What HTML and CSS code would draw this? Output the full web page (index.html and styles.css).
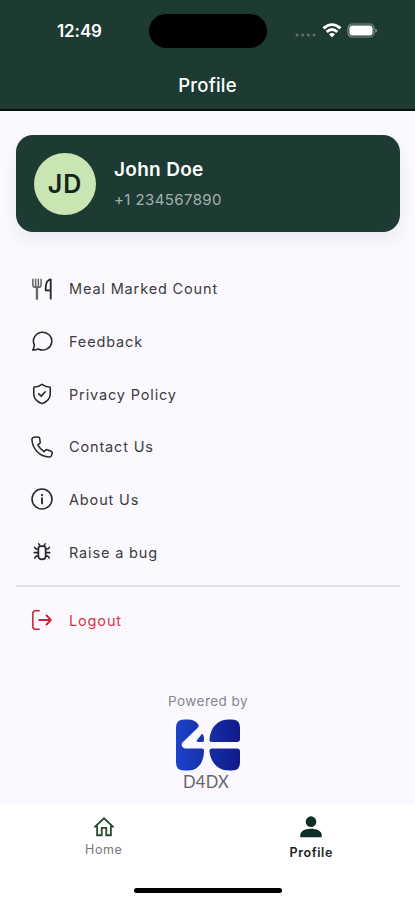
FILE: index.html
```html
<!DOCTYPE html>
<html lang="en">
<head>
    <meta charset="UTF-8">
    <meta name="viewport" content="width=device-width, initial-scale=1.0">
    <title>Profile</title>
    <link rel="stylesheet" href="styles.css">
</head>
<body>
    <div class="screen">
        <header class="header">
            <div class="status-bar">
                <span class="time">12:49</span>
                <div class="island"></div>
                <div class="status-icons">
                    <svg class="signal" width="21" height="4" viewBox="0 0 21 4" fill="#5f726a">
                        <circle cx="2" cy="2" r="1.5"/><circle cx="7.7" cy="2" r="1.5"/>
                        <circle cx="13.3" cy="2" r="1.5"/><circle cx="19" cy="2" r="1.5"/>
                    </svg>
                    <svg class="wifi" width="20" height="15" viewBox="0 0 20 15" fill="none" stroke="#fff" stroke-width="2.8">
                        <path d="M1.5 5.4Q10-2.2 18.5 5.4"/>
                        <path d="M4.7 8.9Q10 4.2 15.3 8.9"/>
                        <path d="M10 14.5l-3-3.2q3-2.4 6 0z" fill="#fff" stroke="none"/>
                    </svg>
                    <svg class="battery" width="31" height="15" viewBox="0 0 31 15">
                        <rect x="1" y="1" width="26" height="13" rx="4.3" fill="none" stroke="#7d8d87" stroke-width="1.2"/>
                        <rect x="2.4" y="2.4" width="23.2" height="10.2" rx="3" fill="#fff"/>
                        <path d="M28.4 5.2q3.2 2.3 0 4.6z" fill="#8c9a95"/>
                    </svg>
                </div>
            </div>
            <h1 class="title">Profile</h1>
        </header>

        <main class="content">
            <section class="profile-card">
                <div class="avatar">JD</div>
                <div class="user">
                    <h2 class="user-name">John Doe</h2>
                    <p class="user-phone">+1 234567890</p>
                </div>
            </section>

            <ul class="menu">
                <li class="menu-item">
                    <svg class="icon" viewBox="0 0 24 24">
                        <g stroke="#66686b">
                            <path d="M2 1.500v6q0 2.500 2.500 2.500h4Q11 10 11 7.500v-6M5 1.500v8M8 1.500v8"/>
                            <path d="M6.500 10v12.500" stroke-width="2.600"/>
                        </g>
                        <path d="M21.500 22.500V1.500q-5.500 1-5.500 9.500v2.500h5.500" stroke-width="2"/>
                    </svg>
                    <span>Meal Marked Count</span>
                </li>
                <li class="menu-item">
                    <svg class="icon" viewBox="0 0 24 24">
                        <path d="M3.500 16A10 9.700 0 1 1 8 20.700Q6 21.700 1.800 21.900 3.700 19.500 3.500 16z"/>
                    </svg>
                    <span>Feedback</span>
                </li>
                <li class="menu-item">
                    <svg class="icon" viewBox="0 0 24 24">
                        <path d="M12 1.500Q8 4.500 3 4.600V12c0 5 3.500 8.500 9 10.500 5.500-2 9-5.500 9-10.500V4.600Q16 4.500 12 1.500z"/>
                        <path d="M8.500 11.800l2.600 2.500 4.500-4.800"/>
                    </svg>
                    <span>Privacy Policy</span>
                </li>
                <li class="menu-item">
                    <svg class="icon" viewBox="0 0 24 24">
                        <path d="M7.800 1L2.900 1.300Q1 1.600 1 3.900C1.600 14.500 9.500 22.400 19.800 23q2.100.1 2.500-1.600l.9-2.800q.2-1.100-.8-1.600l-4.700-2q-1.100-.5-1.900.5l-1.600 1.600Q9.500 13.700 7.400 9.800L9.400 8.100q1-.8.600-1.900L9.300 2Q9 .9 7.800 1z"/>
                    </svg>
                    <span>Contact Us</span>
                </li>
                <li class="menu-item">
                    <svg class="icon" viewBox="0 0 24 24">
                        <circle cx="12" cy="12" r="10.900"/>
                        <path d="M12 11.200V16.800M12 7.300v.8" stroke-width="2"/>
                    </svg>
                    <span>About Us</span>
                </li>
                <li class="menu-item">
                    <svg class="icon" viewBox="0 0 24 24">
                        <path d="M8 8Q8 5.500 12 5.500T16 8V16q0 4-4 4t-4-4z" stroke-width="1.900"/>
                        <path d="M9.700 5.300L8.500 3M14.300 5.300L15.500 3M8 8.800H5.500L4 7M16 8.800h2.500L20 7M8 12.700H3.500M16 12.700h4.500M8 16.500H5.500L4 18.500M16 16.500h2.500L20 18.500"/>
                    </svg>
                    <span>Raise a bug</span>
                </li>
            </ul>

            <hr class="divider">

            <div class="menu-item logout">
                <svg class="icon" viewBox="0 0 24 24">
                    <path d="M9 2H5Q2 2 2 5v14q0 3 3 3h4"/>
                    <path d="M9 12h12.500M17 7l4.500 5-4.500 5" stroke-width="2.200"/>
                </svg>
                <span>Logout</span>
            </div>

            <footer class="powered">
                <p class="powered-text">Powered by</p>
                <svg class="logo" width="66" height="52" viewBox="0 0 66 52">
                    <defs>
                        <linearGradient id="blue" gradientUnits="userSpaceOnUse" x1="0" y1="0" x2="66" y2="0">
                            <stop offset="0" stop-color="#1d43c9"/>
                            <stop offset="1" stop-color="#101a88"/>
                        </linearGradient>
                    </defs>
                    <g fill="url(#blue)">
                        <path d="M9 .5h4.500q6 0 9.500 4.500 1.500 2-.5 4L7.500 23.500Q5.500 26 8 28.500q1.200 1 3 1h16q2 0 2 2c0 12-6 20-15.500 20H9q-8 0-8-8v-35q0-8 8-8z"/>
                        <path d="M28 15.500q1 2 1 5v1q0 1.500-2 1.500h-3q-4 0-1.500-2.500l3.500-4.500q1.200-1.500 2-.5z"/>
                        <path d="M57 .5q8 0 8 8V20q0 3-3 3H37q-3 0-2.500-3C35.500 8 43 .5 54 .5z"/>
                        <path d="M37 29.500h25q3 0 3 3v11q0 8-8 8h-3c-11 0-18.500-8-19.500-19q-.5-3 2.500-3z"/>
                    </g>
                </svg>
                <p class="brand">D4DX</p>
            </footer>
        </main>

        <nav class="tab-bar">
            <a class="tab">
                <svg class="tab-icon" viewBox="0 0 24 24" fill="none" stroke="#294a2c" stroke-width="2">
                    <path d="M1.500 12.500L12 2.500l10.500 10M4.500 10.500v10.500H9.500v-8h5v8H19.500V10.500"/>
                </svg>
                <span>Home</span>
            </a>
            <a class="tab active">
                <svg class="tab-icon" viewBox="0 0 24 24" fill="#102f28">
                    <circle cx="12" cy="6.200" r="5.800"/>
                    <path d="M.3 23.200v-2.500c0-9 23.400-9 23.400 0v2.500z"/>
                </svg>
                <span>Profile</span>
            </a>
            <div class="home-indicator"></div>
        </nav>
    </div>
</body>
</html>
```

FILE: styles.css
```css
* {
    box-sizing: border-box;
}

body {
    margin: 0;
    font-family: Inter, "Liberation Sans", sans-serif;
    background-color: #fbf9ff;
    color: #3a3c40;
}

h1, h2, p, ul {
    margin: 0;
    padding: 0;
}

.screen {
    display: flex;
    flex-direction: column;
    width: 415px;
    height: 900px;
    overflow: hidden;
}

/* header */
.header {
    height: 111px;
    background-color: #1d3b32;
    border-bottom: 2px solid #080f0d;
    color: #fff;
}

.status-bar {
    display: grid;
    grid-template-columns: 149px 118px 1fr;
    align-items: center;
    height: 61px;
}

.time {
    padding-left: 57px;
    font-size: 17px;
    font-weight: 600;
    letter-spacing: -0.1px;
}

.island {
    height: 34px;
    border-radius: 17px;
    background-color: #000;
}

.status-icons {
    display: flex;
    align-items: center;
    padding-left: 28px;
}

.signal {
    margin-top: 9px;
}

.wifi {
    margin-left: 6px;
}

.battery {
    margin-left: 5px;
}

.title {
    padding-top: 13px;
    text-align: center;
    font-size: 18.5px;
    font-weight: 500;
    line-height: 22px;
    letter-spacing: 0.2px;
}

/* content */
.content {
    flex: 1;
    padding: 24px 15px 0 16px;
}

.profile-card {
    display: flex;
    align-items: center;
    gap: 18px;
    height: 97px;
    padding-left: 18px;
    border-radius: 17px;
    background-color: #1d3b32;
    box-shadow: 0 7px 16px rgba(30, 30, 50, 0.07);
}

.avatar {
    display: flex;
    align-items: center;
    justify-content: center;
    width: 62px;
    height: 62px;
    border-radius: 50%;
    background-color: #c9e5b2;
    color: #14231b;
    font-size: 25px;
    font-weight: 600;
    letter-spacing: 1px;
}

.user-name {
    color: #fff;
    font-size: 19px;
    font-weight: 600;
    line-height: 24px;
    letter-spacing: 0.3px;
}

.user-phone {
    margin-top: 8px;
    color: #a6b1ad;
    font-size: 15px;
    line-height: 20px;
    letter-spacing: 0.4px;
}

.menu {
    padding-top: 30.4px;
    list-style: none;
}

.menu-item {
    display: flex;
    align-items: center;
    gap: 16px;
    height: 52.7px;
    padding-left: 15px;
    font-size: 14.5px;
    letter-spacing: 0.85px;
}

.icon {
    width: 22px;
    height: 22px;
    fill: none;
    stroke: #24272b;
    stroke-width: 1.7;
    stroke-linecap: round;
    stroke-linejoin: round;
}

.divider {
    height: 2px;
    margin: 6.6px 0;
    border: 0;
    background-color: #e2e0e7;
}

.logout {
    color: #d73545;
}

.logout .icon {
    stroke: #cf2338;
}

.powered {
    display: flex;
    flex-direction: column;
    align-items: center;
    padding-top: 45.4px;
}

.powered-text {
    color: #85868b;
    font-size: 13.5px;
    line-height: 18px;
    letter-spacing: 0.45px;
}

.logo {
    margin-top: 9px;
}

.brand {
    margin: 1px 4px 0 0;
    color: #65666c;
    font-family: Lato, Inter, sans-serif;
    font-size: 16.5px;
    line-height: 20px;
    letter-spacing: 0.3px;
}

/* bottom navigation */
.tab-bar {
    display: grid;
    grid-template-columns: 1fr 1fr;
    grid-template-rows: 84px 5px;
    height: 96px;
    background-color: #fff;
}

.tab {
    display: flex;
    flex-direction: column;
    align-items: center;
    padding-top: 12px;
    color: #777;
    font-size: 12.5px;
    line-height: 16px;
    letter-spacing: 0.6px;
}

.tab-icon {
    width: 22px;
    height: 22px;
    margin-bottom: 4px;
}

.tab.active {
    color: #222;
    font-weight: 600;
}

.active .tab-icon {
    margin-bottom: 7px;
}

.home-indicator {
    grid-column: 1 / 3;
    justify-self: center;
    width: 148px;
    border-radius: 3px;
    background-color: #000;
}
```
